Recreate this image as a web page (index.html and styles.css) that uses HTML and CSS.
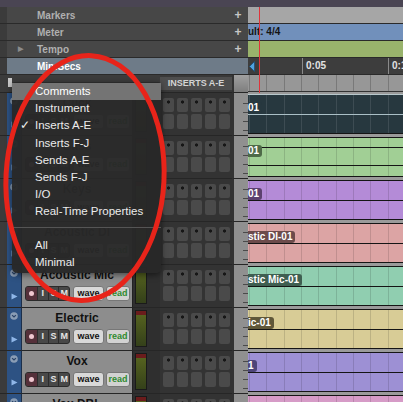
FILE: index.html
```html
<!DOCTYPE html>
<html>
<head>
<meta charset="utf-8">
<link rel="stylesheet" href="styles.css">
</head>
<body>
<div class="app">
  <div class="topbar"></div>

  <div class="ruler">
    <div class="edge"></div>
    <div class="rhead"><span class="twisty"></span><span class="rname">Markers</span><span class="plus">+</span></div>
    <div class="rtime markers"></div>
  </div>
  <div class="ruler">
    <div class="edge"></div>
    <div class="rhead"><span class="twisty"></span><span class="rname">Meter</span><span class="plus">+</span></div>
    <div class="rtime meter">ult: 4/4</div>
  </div>
  <div class="ruler">
    <div class="edge"></div>
    <div class="rhead"><span class="twisty">&#9654;</span><span class="rname">Tempo</span><span class="plus">+</span></div>
    <div class="rtime tempo"></div>
  </div>
  <div class="ruler">
    <div class="edge"></div>
    <div class="rhead mins-head"><span class="twisty"></span><span class="rname">Min:Secs</span></div>
    <div class="rtime mins">
      <div class="seg0"><svg width="6" height="11" viewBox="0 0 6 11"><path d="M5.5 0.5 L0.5 5.5 L5.5 10.5 Z" fill="#4fa3e0" stroke="#1d4f78" stroke-width="0.8"/></svg></div>
      <div class="seg">0:05</div>
      <div class="seg">0:1</div>
    </div>
  </div>

  <div class="hrow">
    <div class="edge"></div>
    <div class="hleft"><div class="hbox"></div></div>
    <div class="hins"><div class="hins-label">INSERTS A-E</div></div>
    <div class="hscale"></div>
    <div class="htime"></div>
  </div>

  <div class="track">
    <div class="edge"></div>
    <div class="strip"><svg class="ic-chev" width="8" height="8" viewBox="0 0 8 8"><circle cx="4" cy="4" r="3.8" fill="#8a9db5"/><path d="M2.1 3.1 L4 5 L5.9 3.1" stroke="#2a4468" stroke-width="1.2" fill="none"/></svg><svg class="ic-play" width="7" height="7" viewBox="0 0 7 7"><path d="M0.5 0.5 L6.5 3.5 L0.5 6.5 Z" fill="#8fb6e8"/></svg></div>
    <div class="thead"><div class="tname">Click</div><div class="btns"><div class="grp"><span class="rec"><i></i></span><span class="b">I</span><span class="b">S</span><span class="b">M</span></div><span class="wave">wave</span><span class="read">read</span></div></div>
    <div class="mtr"><div class="bar"></div></div>
    <div class="ins"><i class="s d"></i><i class="s d"></i><i class="s d"></i><i class="s d"></i><i class="s d"></i><i class="s"></i><i class="s"></i><i class="s"></i><i class="s"></i><i class="s"></i></div>
    <div class="scale"></div>
    <div class="cell"><div class="clip c1"><span class="lbl">01</span></div></div>
  </div>

  <div class="track">
    <div class="edge"></div>
    <div class="strip"><svg class="ic-chev" width="8" height="8" viewBox="0 0 8 8"><circle cx="4" cy="4" r="3.8" fill="#8a9db5"/><path d="M2.1 3.1 L4 5 L5.9 3.1" stroke="#2a4468" stroke-width="1.2" fill="none"/></svg><svg class="ic-play" width="7" height="7" viewBox="0 0 7 7"><path d="M0.5 0.5 L6.5 3.5 L0.5 6.5 Z" fill="#8fb6e8"/></svg></div>
    <div class="thead"><div class="tname">Bass</div><div class="btns"><div class="grp"><span class="rec"><i></i></span><span class="b">I</span><span class="b">S</span><span class="b">M</span></div><span class="wave">wave</span><span class="read">read</span></div></div>
    <div class="mtr"><div class="bar"></div></div>
    <div class="ins"><i class="s d"></i><i class="s d"></i><i class="s d"></i><i class="s d"></i><i class="s d"></i><i class="s"></i><i class="s"></i><i class="s"></i><i class="s"></i><i class="s"></i></div>
    <div class="scale"></div>
    <div class="cell"><div class="clip c2 stereo"><span class="lbl">01</span></div></div>
  </div>

  <div class="track">
    <div class="edge"></div>
    <div class="strip"><svg class="ic-chev" width="8" height="8" viewBox="0 0 8 8"><circle cx="4" cy="4" r="3.8" fill="#8a9db5"/><path d="M2.1 3.1 L4 5 L5.9 3.1" stroke="#2a4468" stroke-width="1.2" fill="none"/></svg><svg class="ic-play" width="7" height="7" viewBox="0 0 7 7"><path d="M0.5 0.5 L6.5 3.5 L0.5 6.5 Z" fill="#8fb6e8"/></svg></div>
    <div class="thead"><div class="tname">Keys</div><div class="btns"><div class="grp"><span class="rec"><i></i></span><span class="b">I</span><span class="b">S</span><span class="b">M</span></div><span class="wave">wave</span><span class="read">read</span></div></div>
    <div class="mtr"><div class="bar"></div></div>
    <div class="ins"><i class="s d"></i><i class="s d"></i><i class="s d"></i><i class="s d"></i><i class="s d"></i><i class="s"></i><i class="s"></i><i class="s"></i><i class="s"></i><i class="s"></i></div>
    <div class="scale"></div>
    <div class="cell"><div class="clip c3"><span class="lbl">01</span></div></div>
  </div>

  <div class="track">
    <div class="edge"></div>
    <div class="strip"><svg class="ic-chev" width="8" height="8" viewBox="0 0 8 8"><circle cx="4" cy="4" r="3.8" fill="#8a9db5"/><path d="M2.1 3.1 L4 5 L5.9 3.1" stroke="#2a4468" stroke-width="1.2" fill="none"/></svg><svg class="ic-play" width="7" height="7" viewBox="0 0 7 7"><path d="M0.5 0.5 L6.5 3.5 L0.5 6.5 Z" fill="#8fb6e8"/></svg></div>
    <div class="thead"><div class="tname">Acoustic DI</div><div class="btns"><div class="grp"><span class="rec"><i></i></span><span class="b">I</span><span class="b">S</span><span class="b">M</span></div><span class="wave">wave</span><span class="read">read</span></div></div>
    <div class="mtr"><div class="bar"></div></div>
    <div class="ins"><i class="s d"></i><i class="s d"></i><i class="s d"></i><i class="s d"></i><i class="s d"></i><i class="s"></i><i class="s"></i><i class="s"></i><i class="s"></i><i class="s"></i></div>
    <div class="scale"></div>
    <div class="cell"><div class="clip c4"><span class="lbl">stic DI-01</span></div></div>
  </div>

  <div class="track">
    <div class="edge"></div>
    <div class="strip"><svg class="ic-chev" width="8" height="8" viewBox="0 0 8 8"><circle cx="4" cy="4" r="3.8" fill="#8a9db5"/><path d="M2.1 3.1 L4 5 L5.9 3.1" stroke="#2a4468" stroke-width="1.2" fill="none"/></svg><svg class="ic-play" width="7" height="7" viewBox="0 0 7 7"><path d="M0.5 0.5 L6.5 3.5 L0.5 6.5 Z" fill="#8fb6e8"/></svg></div>
    <div class="thead"><div class="tname">Acoustic Mic</div><div class="btns"><div class="grp"><span class="rec"><i></i></span><span class="b">I</span><span class="b">S</span><span class="b">M</span></div><span class="wave">wave</span><span class="read">read</span></div></div>
    <div class="mtr"><div class="bar"></div></div>
    <div class="ins"><i class="s d"></i><i class="s d"></i><i class="s d"></i><i class="s d"></i><i class="s d"></i><i class="s"></i><i class="s"></i><i class="s"></i><i class="s"></i><i class="s"></i></div>
    <div class="scale"></div>
    <div class="cell"><div class="clip c5"><span class="lbl">stic Mic-01</span></div></div>
  </div>

  <div class="track">
    <div class="edge"></div>
    <div class="strip"><svg class="ic-chev" width="8" height="8" viewBox="0 0 8 8"><circle cx="4" cy="4" r="3.8" fill="#8a9db5"/><path d="M2.1 3.1 L4 5 L5.9 3.1" stroke="#2a4468" stroke-width="1.2" fill="none"/></svg><svg class="ic-play" width="7" height="7" viewBox="0 0 7 7"><path d="M0.5 0.5 L6.5 3.5 L0.5 6.5 Z" fill="#8fb6e8"/></svg></div>
    <div class="thead"><div class="tname">Electric</div><div class="btns"><div class="grp"><span class="rec"><i></i></span><span class="b">I</span><span class="b">S</span><span class="b">M</span></div><span class="wave">wave</span><span class="read">read</span></div></div>
    <div class="mtr"><div class="bar"></div></div>
    <div class="ins"><i class="s d"></i><i class="s d"></i><i class="s d"></i><i class="s d"></i><i class="s d"></i><i class="s"></i><i class="s"></i><i class="s"></i><i class="s"></i><i class="s"></i></div>
    <div class="scale"></div>
    <div class="cell"><div class="clip c6"><span class="lbl">ic-01</span></div></div>
  </div>

  <div class="track">
    <div class="edge"></div>
    <div class="strip"><svg class="ic-chev" width="8" height="8" viewBox="0 0 8 8"><circle cx="4" cy="4" r="3.8" fill="#8a9db5"/><path d="M2.1 3.1 L4 5 L5.9 3.1" stroke="#2a4468" stroke-width="1.2" fill="none"/></svg><svg class="ic-play" width="7" height="7" viewBox="0 0 7 7"><path d="M0.5 0.5 L6.5 3.5 L0.5 6.5 Z" fill="#8fb6e8"/></svg></div>
    <div class="thead"><div class="tname">Vox</div><div class="btns"><div class="grp"><span class="rec"><i></i></span><span class="b">I</span><span class="b">S</span><span class="b">M</span></div><span class="wave">wave</span><span class="read">read</span></div></div>
    <div class="mtr"><div class="bar"></div></div>
    <div class="ins"><i class="s d"></i><i class="s d"></i><i class="s d"></i><i class="s d"></i><i class="s d"></i><i class="s"></i><i class="s"></i><i class="s"></i><i class="s"></i><i class="s"></i></div>
    <div class="scale"></div>
    <div class="cell"><div class="clip c7"><span class="lbl">1</span></div></div>
  </div>

  <div class="track">
    <div class="edge"></div>
    <div class="strip"><svg class="ic-chev" width="8" height="8" viewBox="0 0 8 8"><circle cx="4" cy="4" r="3.8" fill="#8a9db5"/><path d="M2.1 3.1 L4 5 L5.9 3.1" stroke="#2a4468" stroke-width="1.2" fill="none"/></svg><svg class="ic-play" width="7" height="7" viewBox="0 0 7 7"><path d="M0.5 0.5 L6.5 3.5 L0.5 6.5 Z" fill="#8fb6e8"/></svg></div>
    <div class="thead"><div class="tname">Vox DBL</div><div class="btns"><div class="grp"><span class="rec"><i></i></span><span class="b">I</span><span class="b">S</span><span class="b">M</span></div><span class="wave">wave</span><span class="read">read</span></div></div>
    <div class="mtr"><div class="bar"></div></div>
    <div class="ins"><i class="s d"></i><i class="s d"></i><i class="s d"></i><i class="s d"></i><i class="s d"></i><i class="s"></i><i class="s"></i><i class="s"></i><i class="s"></i><i class="s"></i></div>
    <div class="scale"></div>
    <div class="cell"><div class="clip c8"><span class="lbl">BL-01</span></div></div>
  </div>
</div>

<div class="playhead"></div>

<div class="menu">
  <div class="mi hl"><span class="chk"></span>Comments</div>
  <div class="mi"><span class="chk"></span>Instrument</div>
  <div class="mi"><span class="chk">&#10003;</span>Inserts A-E</div>
  <div class="mi"><span class="chk"></span>Inserts F-J</div>
  <div class="mi"><span class="chk"></span>Sends A-E</div>
  <div class="mi"><span class="chk"></span>Sends F-J</div>
  <div class="mi"><span class="chk"></span>I/O</div>
  <div class="mi"><span class="chk"></span>Real-Time Properties</div>
  <div class="sep"></div>
  <div class="mi"><span class="chk"></span>All</div>
  <div class="mi"><span class="chk"></span>Minimal</div>
</div>

<svg class="circle" width="403" height="402" viewBox="0 0 403 402">
  <ellipse cx="85" cy="178" rx="79" ry="122.5" transform="rotate(3 85 178)" fill="none" stroke="#e8241a" stroke-width="5"/>
</svg>
</body>
</html>
```

FILE: styles.css
```css
html, body {
  margin: 0;
  padding: 0;
}
body {
  width: 403px;
  height: 402px;
  overflow: hidden;
  position: relative;
  background: #3a3a3a;
  font-family: "Liberation Sans", Arial, sans-serif;
}
.app {
  display: flex;
  flex-direction: column;
}
.topbar {
  height: 7px;
  background: #4a4553;
}

/* rulers */
.ruler {
  display: grid;
  grid-template-columns: 7px 241px 155px;
  height: 17px;
}
.ruler > * {
  box-sizing: border-box;
  border-bottom: 1px solid #2a2a2a;
}
.edge {
  background: #3b3b3b;
}
.rhead {
  background: #474747;
  display: flex;
  align-items: center;
  color: #b0b0b0;
  font-weight: bold;
  font-size: 10px;
}
.twisty {
  width: 30px;
  padding-left: 11px;
  box-sizing: border-box;
  font-size: 7px;
  color: #8c8c8c;
}
.rname {
  flex: 1;
}
.plus {
  width: 12px;
  padding-right: 4px;
  font-size: 12px;
  color: #c6c6c6;
  text-align: center;
}
.mins-head {
  background: #6e7b88;
  color: #ffffff;
}
.markers {
  background: #a6a6a6;
}
.meter {
  background: #7190bb;
  color: #141414;
  font-weight: bold;
  font-size: 10px;
  line-height: 16px;
}
.tempo {
  background: #99b36c;
}
.mins {
  background: #3d3d3d;
  display: flex;
  overflow: hidden;
  color: #e2e2e2;
  font-weight: bold;
  font-size: 10px;
  line-height: 16px;
}
.seg0 {
  width: 54px;
  flex-shrink: 0;
  display: flex;
  align-items: center;
  padding-left: 1px;
  box-sizing: border-box;
}
.seg {
  width: 86px;
  flex-shrink: 0;
  border-left: 1px solid #8a8a8a;
  padding-left: 3px;
  box-sizing: border-box;
}

/* header row */
.hrow, .track {
  display: grid;
  grid-template-columns: 7px 15px 110px 28px 72px 16px 155px;
}
.hrow {
  height: 17px;
}
.hleft {
  grid-column: span 3;
  background: #3c3c3c;
  padding: 3px 0 0 1px;
  box-sizing: border-box;
}
.hbox {
  width: 4px;
  height: 9px;
  background: #c9c9c9;
}
.hins {
  background: #393939;
  padding: 2px 0;
  box-sizing: border-box;
}
.hins-label {
  height: 13px;
  background: #4e4e4e;
  color: #d4d4d4;
  font-weight: bold;
  font-size: 9px;
  line-height: 13px;
  text-align: center;
}
.hscale {
  background: linear-gradient(#a0a0a0, #7e7e7e);
  border-left: 2px solid #333333;
}
.htime {
  background-color: #979797;
  background-image: repeating-linear-gradient(90deg, rgba(0,0,0,0.2) 0 1px, transparent 1px 17.33px);
  background-position: 1px 0;
  border-bottom: 1px solid #333333;
  box-sizing: border-box;
}

/* tracks */
.track {
  height: 43px;
}
.track > .edge,
.track > .strip,
.track > .thead,
.track > .mtr,
.track > .ins,
.track > .scale {
  border-top: 1px solid #262626;
  box-sizing: border-box;
}
.strip {
  background: #2d5283;
  border-right: 1px solid #1c2f4a;
  display: flex;
  flex-direction: column;
  padding: 4px 0 0 3px;
}
.ic-play {
  margin-top: 16px;
  margin-left: 1px;
}
.thead {
  background: #8d8d8d;
}
.tname {
  height: 20px;
  line-height: 20px;
  text-align: center;
  font-weight: bold;
  font-size: 12px;
  color: #111111;
  white-space: nowrap;
  overflow: hidden;
}
.btns {
  display: flex;
  padding-left: 3px;
  margin-top: 1px;
  height: 15px;
}
.grp {
  display: flex;
  width: 45px;
  border: 1px solid #2a2a2a;
  border-radius: 3px;
  background: #484848;
  overflow: hidden;
  box-sizing: border-box;
}
.rec {
  width: 11px;
  background: #55303a;
  display: flex;
  align-items: center;
  justify-content: center;
}
.rec i {
  width: 5px;
  height: 5px;
  border-radius: 50%;
  background: #efc7d0;
}
.b {
  flex: 1;
  border-left: 1px solid #2c2c2c;
  color: #e4e4e4;
  font-weight: bold;
  font-size: 9px;
  line-height: 13px;
  text-align: center;
}
.wave, .read {
  height: 15px;
  border-radius: 3px;
  font-weight: bold;
  font-size: 9px;
  line-height: 13px;
  text-align: center;
  box-sizing: border-box;
  border: 1px solid #777777;
}
.wave {
  margin-left: 3px;
  width: 31px;
  background: #d9d9d9;
  color: #111111;
}
.read {
  margin-left: 2px;
  width: 24px;
  background: #d2d2d2;
  color: #2f8a2f;
}
.mtr {
  background: #2f2f2f;
  border-left: 1px solid #222222;
  padding: 2px 0 0 2px;
}
.bar {
  width: 12px;
  height: 37px;
  box-sizing: border-box;
  border: 1px solid #1a1a1a;
  background: linear-gradient(to bottom, #6b1c1c 0 4px, #55621f 4px, #34401a 100%);
}
.ins {
  background: #333333;
  display: grid;
  grid-template-columns: repeat(5, 11px);
  grid-template-rows: 14px 15px;
  gap: 2px 3px;
  padding: 5px 0 0 3px;
}
.s {
  display: block;
  background: #4a4a4a;
  border-radius: 2px;
}
.s.d {
  background: radial-gradient(circle at 50% 4px, #161616 1.3px, transparent 1.9px), #4a4a4a;
}
.scale {
  border-left: 2px solid #333333;
  background: repeating-linear-gradient(180deg, transparent 0 8px, #4a4a4a 8px 9px) right 2px / 5px 100% no-repeat, #909090;
}
.cell {
  background: #9a9a9a;
  padding: 2px 0 1px;
  box-sizing: border-box;
}
.clip {
  height: 100%;
  box-sizing: border-box;
  border-top: 1px solid #151515;
  border-bottom: 1px solid #151515;
  background:
    linear-gradient(#151515, #151515) 0 50% / 100% 1px no-repeat,
    repeating-linear-gradient(90deg, rgba(0,0,0,0.13) 0 1px, transparent 1px 17.33px) 1px 0 / 100% 100%,
    var(--c);
  padding-top: 2px;
}
.clip.stereo {
  background:
    linear-gradient(#151515, #151515) 0 24% / 100% 1px no-repeat,
    linear-gradient(#151515, #151515) 0 74% / 100% 1px no-repeat,
    repeating-linear-gradient(90deg, rgba(0,0,0,0.13) 0 1px, transparent 1px 17.33px) 1px 0 / 100% 100%,
    var(--c);
}
.lbl {
  display: inline-block;
  height: 12px;
  line-height: 12px;
  padding: 0 3px 0 0;
  border-radius: 0 3px 3px 0;
  background: var(--l);
  color: #ffffff;
  font-weight: bold;
  font-size: 10px;
}
.c1 {
  --c: #27383f;
  --l: #27383f;
  border-top-color: #b8c8cc;
  background:
    linear-gradient(#aabfc6, #aabfc6) 0 50% / 100% 1px no-repeat,
    repeating-linear-gradient(90deg, rgba(255,255,255,0.1) 0 1px, transparent 1px 17.33px) 1px 0 / 100% 100%,
    #27383f;
}
.c2 { --c: #a1cf95; --l: #4e6a48; }
.c3 { --c: #b48bd7; --l: #5c416f; }
.c4 { --c: #dca4a4; --l: #6c4b4b; }
.c5 { --c: #90ceb0; --l: #3f5f51; }
.c6 { --c: #d8cc96; --l: #5f5739; }
.c7 { --c: #9d90d4; --l: #4d4579; }
.c8 { --c: #d69bc7; --l: #6a4661; }

/* overlays */
.playhead {
  position: absolute;
  left: 259px;
  top: 7px;
  width: 1px;
  height: 86px;
  background: #e0343a;
}
.menu {
  position: absolute;
  left: 12px;
  top: 82px;
  width: 149px;
  padding: 1px 0 2px;
  background: rgba(40, 40, 40, 0.97);
  border-radius: 3px 3px 5px 5px;
  box-shadow: 0 2px 6px rgba(0,0,0,0.5);
  color: #ececec;
  font-size: 11.5px;
}
.mi {
  display: flex;
  height: 17.2px;
  line-height: 17.2px;
  white-space: nowrap;
}
.mi.hl {
  background: #747474;
  color: #ffffff;
}
.chk {
  width: 23px;
  padding-left: 2px;
  box-sizing: border-box;
  text-align: center;
  font-size: 12px;
}
.sep {
  height: 1px;
  margin: 6px 0 9px;
  background: #555555;
}
.circle {
  position: absolute;
  left: 0;
  top: 0;
  pointer-events: none;
}
```
